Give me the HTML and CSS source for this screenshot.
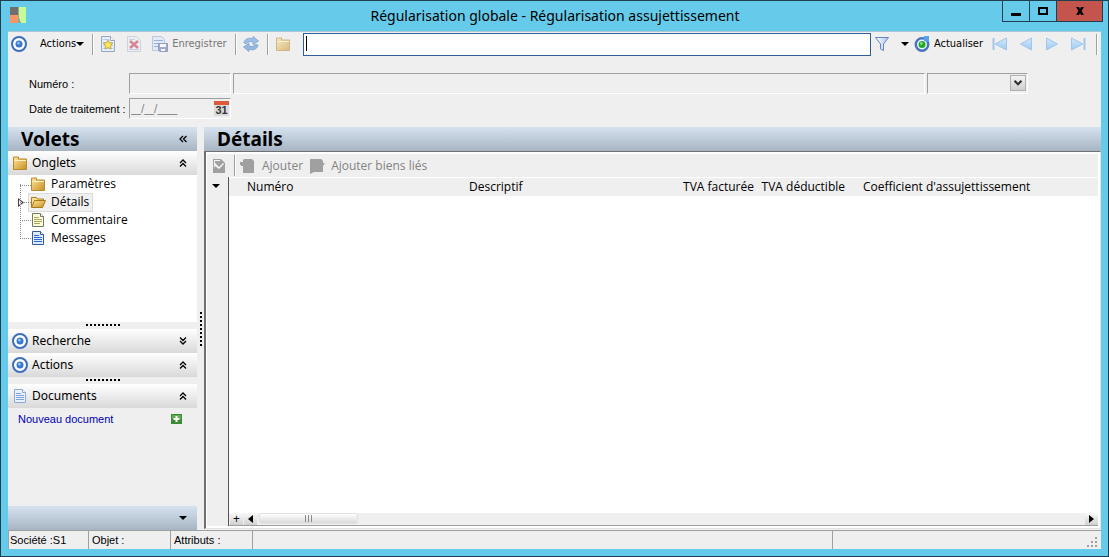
FILE: index.html
```
<!DOCTYPE html>
<html lang="fr">
<head>
  <meta charset="UTF-8" />
  <meta name="viewport" content="width=device-width, initial-scale=1" />
  <title>Régularisation globale - Régularisation assujettissement</title>
  <link rel="stylesheet" href="styles.css">
</head>
<body>

  <svg class="defs" aria-hidden="true">
    <defs>
      <linearGradient id="gFolder" x1="0" y1="0" x2="1" y2="1">
        <stop offset="0" stop-color="#ffe79c" />
        <stop offset="1" stop-color="#c98f22" />
      </linearGradient>
      <linearGradient id="gNav" x1="0" y1="0" x2="0" y2="1">
        <stop offset="0" stop-color="#d3e9fb" />
        <stop offset="1" stop-color="#9dc9f2" />
      </linearGradient>
      <linearGradient id="gFunnel" x1="0" y1="0" x2="1" y2="0">
        <stop offset="0" stop-color="#ffffff" />
        <stop offset="1" stop-color="#a9c4ee" />
      </linearGradient>
      <symbol id="target" viewBox="0 0 16 16">
        <circle cx="8" cy="8" r="7" fill="#fff" stroke="#3c6ebc" stroke-width="2" />
        <circle cx="8" cy="8" r="3.5" fill="#3a78cf" />
        <circle cx="7.4" cy="7.2" r="1.4" fill="#8fc0f5" />
      </symbol>
      <symbol id="folder" viewBox="0 0 16 16">
        <path d="M1.500 3V2H6.500V4H14.500V14.500H1.500Z" fill="url(#gFolder)" stroke="#b58a30" />
        <path d="M2.500 5.500H14" stroke="#fff2be" />
      </symbol>
      <symbol id="folder-open" viewBox="0 0 16 16">
        <path d="M1.500 13V3.500H6.500l1 1.500H13.500V7" fill="#fbe08d" stroke="#a87a1c" />
        <path d="M1.500 13.500 4.500 6.500H15.500L12.500 13.500Z" fill="url(#gFolder)" stroke="#a87a1c" />
      </symbol>
      <symbol id="doc" viewBox="0 0 16 16">
        <path d="M2.500 1.500H10.500L13.500 4.500V14.500H2.500Z" fill="#e9f1fd" stroke="#8fa8d6" />
        <path d="M10.500 1.500V4.500H13.500" fill="#fff" stroke="#8fa8d6" />
        <path d="M4 5.500H9M4 7.500H12M4 9.500H12M4 11.500H12" stroke="#7fa3dc" />
      </symbol>
      <symbol id="doc-yellow" viewBox="0 0 16 16">
        <path d="M2.500 1.500H10.500L13.500 4.500V14.500H2.500Z" fill="#fffbd2" stroke="#707a6a" />
        <path d="M10.500 1.500V4.500H13.500" fill="#fff" stroke="#707a6a" />
        <path d="M4 5.500H9M4 7.500H12M4 9.500H12M4 11.500H10" stroke="#a9a765" />
      </symbol>
      <symbol id="doc-blue" viewBox="0 0 16 16">
        <path d="M2.500 1.500H10.500L13.500 4.500V14.500H2.500Z" fill="#dcebff" stroke="#3c5a94" />
        <path d="M10.500 1.500V4.500H13.500" fill="#fff" stroke="#3c5a94" />
        <path d="M4 5.500H9M4 7.500H12M4 9.500H12M4 11.500H12" stroke="#2f66c8" />
      </symbol>
      <symbol id="up2" viewBox="0 0 8 8">
        <path d="M1 4 4 1 7 4M1 7.500 4 4.500 7 7.500" fill="none" stroke="#000" stroke-width="1.300" />
      </symbol>
      <symbol id="down2" viewBox="0 0 8 8">
        <path d="M1 .500 4 3.500 7 .500M1 4 4 7 7 4" fill="none" stroke="#000" stroke-width="1.300" />
      </symbol>
      <symbol id="caret" viewBox="0 0 8 4">
        <path d="M0 0H8L4 4Z" fill="#000" />
      </symbol>
    </defs>
  </svg>

  <div class="window">
    <header class="titlebar">
      <svg class="logo" viewBox="0 0 16 16">
        <path fill="#6f6f6f" d="M0 0H8V8H0Z" />
        <path fill="#f79569" d="M0 8H8V16H0Z" />
        <path fill="#c5fb96" d="M9 0H16V16H11L9 11Z" />
        <path fill="#9aa68c" d="M8 0H9V11L11 16H8Z" />
      </svg>
      <h1>Régularisation globale - Régularisation assujettissement</h1>
      <div class="winbuttons">
        <button type="button" aria-label="Réduire"><svg width="12" height="10" viewBox="0 0 12 10"><path d="M1 7H11V10H1Z" /></svg></button>
        <button type="button" aria-label="Agrandir"><svg width="12" height="10" viewBox="0 0 12 10"><path d="M1 1H11V9H1ZM3 3V7H9V3Z" fill-rule="evenodd" /></svg></button>
        <button type="button" class="close" aria-label="Fermer"><svg width="12" height="10" viewBox="0 0 12 10"><path d="M2 1H5L6 3 7 1H10L7.500 5 10 9H7L6 7 5 9H2L4.500 5Z" /></svg></button>
      </div>
    </header>

    <div class="client">
      <nav class="toolbar">
        <button type="button" class="menu"><svg class="icon"><use href="#target" /></svg><span>Actions</span><svg class="caret"><use href="#caret" /></svg></button>
        <i class="sep"></i>
        <div class="group">
          <button type="button" class="soft" aria-label="Nouveau">
            <svg class="icon" viewBox="0 0 16 16"><path d="M1.500.500H10.500L14.500 4.500V15.500H1.500Z" fill="#e4eefc" stroke="#8296b8" /><path d="M10.500.500V4.500H14.500" fill="#fff" stroke="#8296b8" /><path d="M3 3.500H9M3 6.500H13M3 9.500H13M3 12.500H13" stroke="#a9c2ea" /><path d="M8 4 9.500 6.800 12.800 7.200 10.500 9.500 11 13 8 11.500 5 13 5.500 9.500 3.200 7.200 6.500 6.800Z" fill="#ffe92c" stroke="#bb9a1c" /></svg>
          </button>
          <button type="button" class="dim" aria-label="Supprimer">
            <svg class="icon" viewBox="0 0 16 16"><path d="M1.500.500H10.500L14.500 4.500V15.500H1.500Z" fill="#e8ecf6" stroke="#b4bccd" /><path d="M3 3.500H9M3 13.500H13" stroke="#a9b8d8" /><path d="M4 5 12 12M12 5 4 12" stroke="#c62f48" stroke-width="2.500" /></svg>
          </button>
          <button type="button" disabled>
            <svg class="icon dim" viewBox="0 0 16 16"><path d="M.500.500H9.500L12.500 3.500V14.500H.500Z" fill="#d9e6fb" stroke="#91a6cd" /><path d="M2 4.500H11M2 7.500H8M2 10.500H7" stroke="#4f82d8" /><path d="M6.500 7.500H15.500V15.500H7.500L6.500 14.500Z" fill="#6472be" stroke="#4b5798" /><path d="M8 8H14V11H8ZM9 13H13V15H9Z" fill="#fff" /></svg>
            <span>Enregistrer</span>
          </button>
        </div>
        <i class="sep"></i>
        <button type="button" class="soft" aria-label="Synchroniser">
          <svg class="icon" viewBox="0 0 16 16"><path d="M1 7C1.500 3 6 1 10 3V.500L15.500 5 10 8.500V6C7 5 5 5.500 4 7.500Z" fill="#8bb5e6" stroke="#6f98cb" /><path d="M15 9C14.500 13 10 15 6 13V15.500L.500 11 6 7.500V10C9 11 11 10.500 12 8.500Z" fill="#7fa9dd" stroke="#6f98cb" /></svg>
        </button>
        <i class="sep"></i>
        <button type="button" class="dim" aria-label="Dossier"><svg class="icon"><use href="#folder" /></svg></button>
        <div class="search">
          <input type="text" aria-label="Recherche rapide">
          <i class="cursor"></i>
        </div>
        <button type="button" class="filter" aria-label="Filtrer">
          <svg class="icon" viewBox="0 0 16 16"><path d="M1.500 1.500H14.500L9.500 8V14.500L6.500 13V8Z" fill="url(#gFunnel)" stroke="#6785bc" /></svg>
          <svg class="caret"><use href="#caret" /></svg>
        </button>
        <button type="button" class="refresh">
          <svg class="icon" viewBox="0 0 16 16"><circle cx="8" cy="8.500" r="6.200" fill="#f4f9ff" stroke="#4676c0" stroke-width="2.500" /><path d="M10 0H15V6L10 5Z" fill="#5ba3e8" /><circle cx="8" cy="8.500" r="3.500" fill="#23a824" /><circle cx="7.300" cy="7.500" r="1.400" fill="#82e07d" /></svg>
          <span>Actualiser</span>
        </button>
        <div class="pager">
          <button type="button" aria-label="Premier"><svg class="icon nav" viewBox="0 0 16 16"><path d="M1.500 2V14" stroke-width="2" /><path d="M14.500 2V14L3 8Z" /></svg></button>
          <button type="button" aria-label="Précédent"><svg class="icon nav" viewBox="0 0 16 16"><path d="M13.500 2V14L2.500 8Z" /></svg></button>
          <button type="button" aria-label="Suivant"><svg class="icon nav" viewBox="0 0 16 16"><path d="M2.500 2V14L13.500 8Z" /></svg></button>
          <button type="button" aria-label="Dernier"><svg class="icon nav" viewBox="0 0 16 16"><path d="M14.500 2V14" stroke-width="2" /><path d="M1.500 2V14L13 8Z" /></svg></button>
        </div>
        <i class="sep"></i>
      </nav>

      <form class="fields">
        <label for="numero">Numéro :</label>
        <input type="text" id="numero" class="field" disabled>
        <input type="text" class="field" aria-label="Libellé" disabled>
        <div class="field combo">
          <select aria-label="Type" disabled><option></option></select>
          <svg viewBox="0 0 16 16"><path d="M4 5.500 8 9.500 12 5.500" fill="none" stroke="#333" stroke-width="2.500" /></svg>
        </div>
        <label for="date">Date de traitement :</label>
        <div class="field date">
          <input type="text" id="date" value="__/__/____" disabled>
          <button type="button" aria-label="Calendrier"><b>31</b></button>
        </div>
      </form>

      <div class="panes">
        <aside class="sidebar">
          <h2 class="bar">Volets
            <svg class="chev" viewBox="0 0 8 8"><path d="M4 1 1 4 4 7M7.500 1 4.500 4 7.500 7" fill="none" stroke="#000" stroke-width="1.300" /></svg>
          </h2>
          <h3><svg class="icon"><use href="#folder" /></svg>Onglets<svg class="chev"><use href="#up2" /></svg></h3>
          <ul class="tree">
            <li><a href="#"><svg class="icon"><use href="#folder" /></svg>Paramètres</a></li>
            <li class="open"><a href="#" class="selected"><svg class="icon"><use href="#folder-open" /></svg>Détails</a></li>
            <li><a href="#"><svg class="icon"><use href="#doc-yellow" /></svg>Commentaire</a></li>
            <li><a href="#"><svg class="icon"><use href="#doc-blue" /></svg>Messages</a></li>
          </ul>
          <div class="grip"></div>
          <h3><svg class="icon"><use href="#target" /></svg>Recherche<svg class="chev"><use href="#down2" /></svg></h3>
          <h3><svg class="icon"><use href="#target" /></svg>Actions<svg class="chev"><use href="#up2" /></svg></h3>
          <div class="grip"></div>
          <h3><svg class="icon"><use href="#doc" /></svg>Documents<svg class="chev"><use href="#up2" /></svg></h3>
          <div class="docs">
            <a href="#">Nouveau document</a>
            <svg width="11" height="10" viewBox="0 0 11 10"><path d="M0 0H11V10H0Z" fill="#3b8a35" /><path d="M1 1H10V5H1Z" fill="#5fae52" /><path d="M5.500 2V8M2.500 5H8.500" stroke="#fff" stroke-width="2" /></svg>
          </div>
          <div class="bar foot"><svg class="caret"><use href="#caret" /></svg></div>
        </aside>

        <div class="splitter"></div>

        <main class="main">
          <h2 class="bar">Détails</h2>
          <section class="sheet">
            <div class="actions">
              <button type="button" class="tick" aria-label="Valider" disabled><svg class="icon" viewBox="0 0 16 16"><path d="M2 1H10L14 5V15H2Z" fill="#a0a0a0" /><path d="M3 2H9V3H4V5L6 7 8 9 10 7 12 5 13 6 8 11 4 8 3 10Z" fill="#f4f4f4" /></svg></button>
              <i class="sep"></i>
              <button type="button" disabled><svg class="icon" viewBox="0 0 16 16"><path d="M4 1H12L14 3V15H3V8H1V7H0V4H3V2Z" fill="#a0a0a0" /></svg>Ajouter</button>
              <button type="button" disabled><svg class="icon" viewBox="0 0 16 16"><path d="M1 1H12L14 3V5H16L14 8V14H5L1 16Z" fill="#a0a0a0" /></svg>Ajouter biens liés</button>
            </div>
            <div class="grid">
              <div class="gutter"><svg class="caret"><use href="#caret" /></svg></div>
              <div class="gridbody">
                <table>
                  <thead>
                    <tr>
                      <th class="c-num">Numéro</th>
                      <th class="c-desc">Descriptif</th>
                      <th class="c-tva">TVA facturée</th>
                      <th class="c-tvad">TVA déductible</th>
                      <th class="c-coef">Coefficient d'assujettissement</th>
                    </tr>
                  </thead>
                  <tbody></tbody>
                </table>
                <div class="scroll">
                  <button type="button" aria-label="Ajouter une ligne">+</button>
                  <button type="button" aria-label="Défiler à gauche"><svg width="5" height="8" viewBox="0 0 5 8"><path d="M5 0V8L0 4Z" /></svg></button>
                  <div class="track"><div class="thumb"></div></div>
                  <button type="button" aria-label="Défiler à droite"><svg width="5" height="8" viewBox="0 0 5 8"><path d="M0 0V8L5 4Z" /></svg></button>
                </div>
              </div>
            </div>
          </section>
        </main>
      </div>

      <footer class="status">
        <span>Société :S1</span>
        <span>Objet :</span>
        <span>Attributs :</span>
        <span></span>
        <span><svg width="11" height="11" viewBox="0 0 11 11"><path fill="#a0a0a0" d="M8 0h2v2h-2zM4 4h2v2h-2zM8 4h2v2h-2zM0 8h2v2h-2zM4 8h2v2h-2zM8 8h2v2h-2z" /></svg></span>
      </footer>
    </div>
  </div>

</body>
</html>
```
FILE: styles.css
```
* {
  box-sizing: border-box;
}
body {
  margin: 0;
  font-family: "Open Sans", "Noto Sans", sans-serif;
  font-size: 12px;
  line-height: 16px;
  color: #000;
}
h1, h2, h3, ul {
  margin: 0;
  padding: 0;
  font-weight: normal;
}
button {
  display: flex;
  align-items: center;
  padding: 0;
  border: none;
  background: none;
  font: inherit;
  color: inherit;
}
svg {
  flex: none;
}
.defs {
  position: absolute;
  width: 0;
  height: 0;
}
.icon {
  width: 16px;
  height: 16px;
}
.caret {
  width: 8px;
  height: 4px;
}
.dim {
  opacity: 0.55;
}
.soft {
  opacity: 0.8;
}

.window {
  display: flex;
  flex-direction: column;
  height: 100vh;
  padding: 0 7px 7px;
  border: 1px solid #1d3f50;
  background: #66cbea;
}
.titlebar {
  display: flex;
  align-items: flex-start;
  justify-content: space-between;
  height: 30px;
}
.logo {
  width: 16px;
  height: 16px;
  margin: 6px 2px;
}
.titlebar h1 {
  flex: 1;
  padding: 5px 0 0 80px;
  font-family: "Noto Sans", "Open Sans", sans-serif;
  font-size: 14px;
  line-height: 20px;
  text-align: center;
}
.winbuttons {
  display: flex;
  margin-right: -2px;
  border: 1px solid #1d3f50;
  border-top: none;
}
.winbuttons button {
  justify-content: center;
  width: 27px;
  height: 20px;
  border-right: 1px solid #1d3f50;
}
.winbuttons .close {
  width: 45px;
  border: none;
  background: #c3554d;
}

.client {
  flex: 1;
  display: flex;
  flex-direction: column;
  min-height: 0;
  background: #efefef;
  border-top: 1px solid #a9c9d6;
}

/* toolbar */
.toolbar {
  display: flex;
  align-items: center;
  height: 24px;
  padding: 0 3px;
  font-family: "DejaVu Sans Condensed", "DejaVu Sans", sans-serif;
  font-size: 11px;
}
.sep {
  flex: none;
  width: 2px;
  height: 21px;
  margin: 0 6px 0 8px;
  border-left: 1px solid #a0a0a0;
  border-right: 1px solid #fff;
}
.menu span {
  margin: 0 0 0 13px;
}
.group {
  display: flex;
  gap: 10px;
}
.group button {
  color: #777;
  gap: 4px;
}
.search {
  position: relative;
  flex: 1;
  margin: 0 3px 0 12px;
}
.search input {
  display: block;
  width: 100%;
  height: 23px;
  border: 1px solid #2f5f95;
  background: #fff;
  outline: none;
}
.cursor {
  position: absolute;
  left: 3px;
  top: 3px;
  width: 1px;
  height: 15px;
  background: #000;
}
.filter {
  gap: 11px;
  margin-right: 5px;
}
.refresh {
  gap: 4px;
  margin-right: 9px;
}
.pager {
  display: flex;
  gap: 10px;
}
.nav {
  fill: url(#gNav);
  stroke: #a3c6e8;
}
.pager + .sep {
  margin: 0 0 0 10px;
}

/* header fields */
.fields {
  display: grid;
  grid-template-columns: 98px 102px 1fr 101px;
  align-items: center;
  gap: 4px 2px;
  padding: 17px 73px 8px 21px;
  font-family: "Liberation Sans", Arial, sans-serif;
  font-size: 11px;
}
.field {
  width: 100%;
  height: 21px;
  border: 1px solid;
  border-color: #a0a0a0 #fff #fff #a0a0a0;
  background: #efefef;
}
.combo, .date {
  display: flex;
  align-items: center;
}
.combo {
  position: relative;
}
.combo select {
  width: 100%;
  height: 19px;
  appearance: none;
  border: none;
  background: transparent;
}
.combo svg {
  position: absolute;
  right: 1px;
  top: 1px;
  width: 16px;
  height: 16px;
  border: 1px solid #b0b0b0;
  background: linear-gradient(#f4f4f4, #cfcfcf);
}
.date input {
  flex: 1;
  min-width: 0;
  padding: 0 1px;
  border: none;
  background: transparent;
  color: #777;
  font-family: "DejaVu Sans Condensed", "DejaVu Sans", sans-serif;
  font-size: 11px;
}
.date button {
  justify-content: center;
  width: 15px;
  height: 15px;
  margin-right: 1px;
  border-top: 4px solid #db5a3a;
  background: #dcdcdc;
  font-size: 11px;
  line-height: 11px;
  color: #333;
}

/* panes */
.panes {
  flex: 1;
  display: flex;
  min-height: 0;
}
.bar {
  display: flex;
  align-items: center;
  flex: none;
  height: 24px;
  padding-left: 13px;
  background: linear-gradient(#d6e2ee, #a7b4c3);
  font-family: "Noto Sans", "Open Sans", sans-serif;
  font-size: 19px;
  font-weight: bold;
}
.sidebar {
  display: flex;
  flex-direction: column;
  width: 189px;
}
.chev {
  width: 8px;
  height: 8px;
  margin: 0 10px 0 auto;
}
.sidebar h3 {
  display: flex;
  align-items: center;
  flex: none;
  height: 24px;
  padding-left: 4px;
  background: linear-gradient(#fff, #d9d9d9);
  font-family: "Noto Sans", "Open Sans", sans-serif;
  font-size: 12px;
}
.sidebar h3 .icon {
  margin-right: 4px;
}
.tree {
  height: 147px;
  padding: 0 0 0 12px;
  background: #fff;
  list-style: none;
}
.tree li {
  position: relative;
  display: flex;
  align-items: center;
  height: 18px;
  padding-left: 9px;
}
.tree li::before {
  content: "";
  position: absolute;
  left: 0;
  top: -9px;
  width: 10px;
  height: 18px;
  border-left: 1px dotted #888;
  border-bottom: 1px dotted #888;
}
.tree li:first-child::before {
  top: 9px;
  height: 1px;
}
.tree .open::after {
  content: "";
  position: absolute;
  left: -2px;
  top: 5px;
  width: 6px;
  height: 9px;
  background: #444;
  clip-path: polygon(0 0, 100% 50%, 0 100%, 0 0, 1px 2px, 1px 7px, 4px 50%, 1px 2px);
}
.tree a {
  display: flex;
  align-items: center;
  height: 17px;
  padding: 0 3px 0 1px;
  gap: 5px;
  color: #000;
  text-decoration: none;
}
.tree .selected {
  background: #f0f0f0;
  outline: 1px solid #dcdcdc;
}
.grip {
  flex: none;
  height: 7px;
  background: repeating-linear-gradient(90deg, #000 0 2px, transparent 2px 4px) center 2px / 34px 2px no-repeat;
}
.docs {
  flex: 1;
  display: flex;
  align-items: flex-start;
  justify-content: space-between;
  padding: 3px 15px 0 10px;
}
.docs svg {
  margin-top: 3px;
}
.docs a {
  color: #0000b4;
  font-family: "Liberation Sans", Arial, sans-serif;
  font-size: 11px;
  text-decoration: none;
}
.foot {
  justify-content: flex-end;
  padding-right: 10px;
}
.splitter {
  width: 7px;
  background: repeating-linear-gradient(#000 0 2px, transparent 2px 4px) 3px center / 2px 34px no-repeat;
}
.main {
  flex: 1;
  display: flex;
  flex-direction: column;
  min-width: 0;
  padding-bottom: 1px;
}
.sheet {
  flex: 1;
  display: flex;
  flex-direction: column;
  padding: 2px 2px 2px 1px;
  border: 1px solid;
  border-color: #707070 #e3e3e3 #e3e3e3 #707070;
  border-left-width: 2px;
  background: #fff;
}
.actions {
  display: flex;
  align-items: center;
  height: 23px;
  background: #efefef;
  color: #828282;
}
.actions .tick {
  margin-left: 4px;
}
.actions button {
  gap: 6px;
}
.actions button + button {
  margin-left: 6px;
}
.actions .sep {
  margin: 0 4px 0 7px;
}
.grid {
  flex: 1;
  display: flex;
}
.gutter {
  width: 22px;
  padding: 7px 0 0 5px;
  border-right: 1px solid #555;
  background: #efefef;
}
.gutter .caret {
  display: block;
}
.gridbody {
  flex: 1;
  display: flex;
  flex-direction: column;
  justify-content: space-between;
}
table {
  width: 100%;
  table-layout: fixed;
  border-collapse: collapse;
  border-top: 1px solid #fff;
  background: #efefef;
}
th {
  height: 18px;
  padding: 0;
  font-weight: normal;
  text-align: left;
  white-space: nowrap;
}
.c-num {
  width: 240px;
  padding-left: 18px;
}
.c-desc {
  width: 200px;
}
.c-tva {
  width: 85px;
  text-align: right;
}
.c-tvad {
  width: 91px;
  text-align: right;
}
.c-coef {
  padding-left: 18px;
}
.scroll {
  display: flex;
  height: 13px;
  background: #efefef;
  border-bottom: 1px solid #a0a0a0;
}
.scroll button {
  justify-content: center;
  width: 13px;
  margin-left: 1px;
  background: linear-gradient(#fafafa, #d0d0d0);
}
.track {
  flex: 1;
  padding-left: 2px;
}
.thumb {
  width: 99px;
  height: 11px;
  border-radius: 3px;
  border: 1px solid #e2e2e2;
  background:
    repeating-linear-gradient(90deg, #888 0 1px, transparent 1px 3px) center / 8px 7px no-repeat,
    linear-gradient(#fff, #dadada);
}

.status {
  display: flex;
  height: 19px;
  border-top: 1px solid #a0a0a0;
  font-family: "Liberation Sans", Arial, sans-serif;
  font-size: 11px;
  line-height: 18px;
}
.status span {
  width: 82px;
  padding-left: 3px;
  border-left: 1px solid #a0a0a0;
}
.status span:first-child {
  width: 80px;
  padding-left: 1px;
}
.status span:nth-child(4) {
  flex: 1;
}
.status span:last-child {
  display: flex;
  justify-content: flex-end;
  align-items: flex-end;
  width: 269px;
  padding: 0 3px 1px;
}
```
